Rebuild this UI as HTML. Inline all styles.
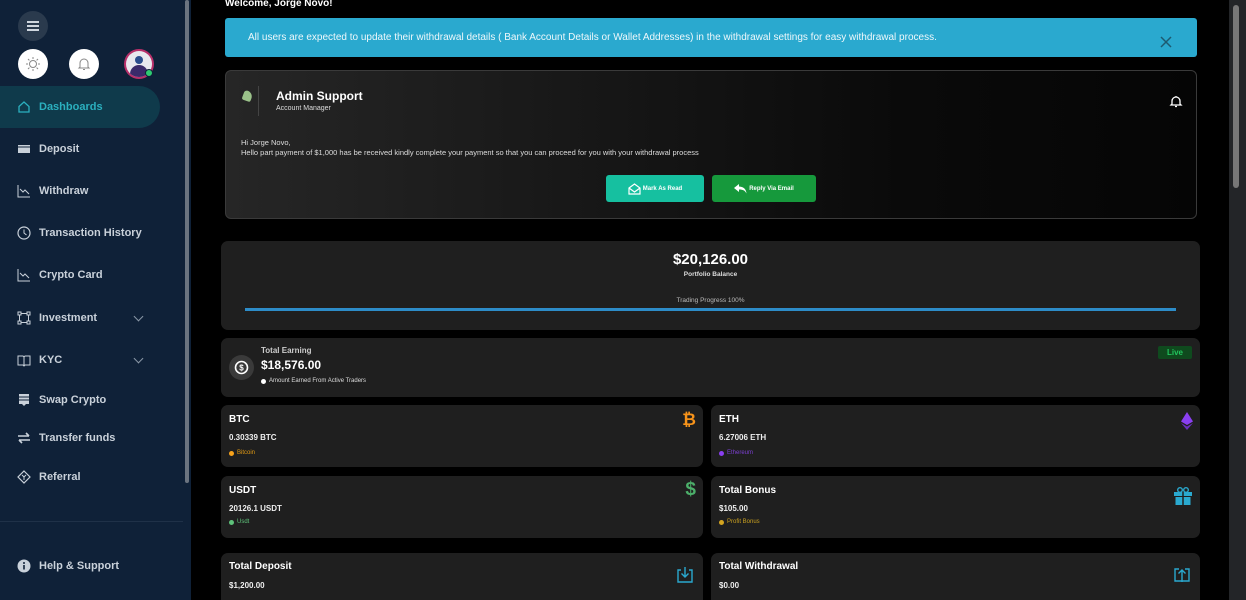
<!DOCTYPE html>
<html style="width:1246px;height:600px;overflow:hidden"><head><style>
*{box-sizing:border-box;margin:0;padding:0}
body{width:1246px;height:600px;overflow:hidden;background:#000;font-family:"Liberation Sans",sans-serif;color:#fff;position:relative}
.sb{position:absolute;left:0;top:0;width:183px;height:600px;background:#0f2138}
.sbs{position:absolute;left:183px;top:0;width:8px;height:600px;background:#0f2138}
.sbs i{position:absolute;left:2px;top:0;width:4px;height:483px;background:#6b7480;border-radius:2px}
.ham{position:absolute;left:18px;top:11px;width:30px;height:30px;border-radius:50%;background:#2a3a4d}
.ham b{position:absolute;left:9px;width:12px;height:2px;background:#cfd6de}
.circ{position:absolute;top:49px;width:30px;height:30px;border-radius:50%;background:#fff}
.nav{position:absolute;left:0;width:183px;height:42px;font-size:11px;font-weight:bold;color:#c9d1da;display:flex;align-items:center;padding-left:39px}
.nav svg{position:absolute;left:17px}
.act{background:#0f3a4b;color:#2bb0bf;width:160px;border-radius:0 21px 21px 0}
.chev{position:absolute;left:135px;top:16px;width:7px;height:7px;border-right:1.3px solid #8a97a6;border-bottom:1.3px solid #8a97a6;transform:rotate(45deg)}
.rsb{position:absolute;left:1229px;top:0;width:17px;height:600px;background:#232528}
.rsb i{position:absolute;left:4px;top:5px;width:6px;height:183px;background:#777;border-radius:3px}
.card{position:absolute;background:#1f1f1f;border-radius:7px}
.lbl{position:absolute;left:8px;font-size:10px;font-weight:bold}
.val{position:absolute;left:8px;font-size:8px;font-weight:bold;color:#eee}
.sub{position:absolute;left:8px;font-size:6px;display:flex;align-items:center}
.sub b{width:5px;height:5px;border-radius:50%;margin-right:3px;display:inline-block}
</style></head><body>
<div class="sb">
 <div class="ham"><b style="top:10px"></b><b style="top:14px"></b><b style="top:18px"></b></div>
 <div class="circ" style="left:18px"><svg width="30" height="30"><circle cx="15" cy="15" r="3.5" fill="none" stroke="#888" stroke-width="1"/><g stroke="#888" stroke-width="1"><path d="M15 8v2M15 20v2M8 15h2M20 15h2M10 10l1.4 1.4M18.6 18.6l1.4 1.4M10 20l1.4-1.4M18.6 11.4l1.4-1.4"/></g></svg></div>
 <div class="circ" style="left:69px"><svg width="30" height="30"><path d="M11 18v-4a4 4 0 0 1 8 0v4l1 1h-10zM14 20.5h2" fill="none" stroke="#888" stroke-width="1"/></svg></div>
 <div class="circ" style="left:124px;background:#b8306a"><div style="position:absolute;left:2px;top:2px;width:26px;height:26px;border-radius:50%;background:#e8e8ee;overflow:hidden"><div style="position:absolute;left:9px;top:5px;width:8px;height:8px;border-radius:50%;background:#2a4c8c"></div><div style="position:absolute;left:4px;top:14px;width:18px;height:14px;border-radius:9px 9px 0 0;background:#3a2a6a"></div></div><div style="position:absolute;left:21px;top:20px;width:8px;height:8px;border-radius:50%;background:#2ecc71;border:1px solid #0f2138"></div></div>
 <div class="nav act" style="top:86px"><svg width="14" height="14" viewBox="0 0 14 14"><path d="M2 6.5L7 2l5 4.5V12H2z" fill="none" stroke="#2bb0bf" stroke-width="1.3"/></svg>Dashboards</div>
 <div class="nav" style="top:128px"><svg width="14" height="14"><rect x="1" y="3" width="12" height="8" fill="#c9d1da"/><path d="M1 5h12" stroke="#0f2138"/></svg>Deposit</div>
 <div class="nav" style="top:170px"><svg width="14" height="14"><path d="M1 1v12h12M3 5l3 3 2-2 4 4" fill="none" stroke="#c9d1da"/></svg>Withdraw</div>
 <div class="nav" style="top:212px"><svg width="14" height="14"><circle cx="7" cy="7" r="6" fill="none" stroke="#c9d1da" stroke-width="1.2"/><path d="M7 3.5V7l2.5 2" fill="none" stroke="#c9d1da"/></svg>Transaction History</div>
 <div class="nav" style="top:254px"><svg width="14" height="14"><path d="M1 1v12h12M3 5l3 3 2-2 4 4" fill="none" stroke="#c9d1da"/></svg>Crypto Card</div>
 <div class="nav" style="top:297px"><svg width="14" height="14"><rect x="2.5" y="2.5" width="9" height="9" fill="none" stroke="#c9d1da"/><rect x="1" y="1" width="3" height="3" fill="#0f2138" stroke="#c9d1da"/><rect x="10" y="1" width="3" height="3" fill="#0f2138" stroke="#c9d1da"/><rect x="1" y="10" width="3" height="3" fill="#0f2138" stroke="#c9d1da"/><rect x="10" y="10" width="3" height="3" fill="#0f2138" stroke="#c9d1da"/></svg>Investment<span class="chev"></span></div>
 <div class="nav" style="top:339px"><svg width="14" height="14"><path d="M1 3h5l1 1 1-1h5v9H8l-1 1-1-1H1zM7 4v9" fill="none" stroke="#c9d1da"/></svg>KYC<span class="chev"></span></div>
 <div class="nav" style="top:379px"><svg width="14" height="14"><rect x="2" y="1" width="10" height="10" fill="#c9d1da"/><path d="M2 4h10M2 7h10" stroke="#0f2138"/><path d="M5 11l2 2 2-2" fill="#c9d1da"/></svg>Swap Crypto</div>
 <div class="nav" style="top:417px"><svg width="14" height="14"><path d="M1 5h11M9 2l3 3M13 9H2M5 12L2 9" fill="none" stroke="#c9d1da" stroke-width="1.6"/></svg>Transfer funds</div>
 <div class="nav" style="top:456px"><svg width="14" height="14"><path d="M7 1l6 6-6 6-6-6z" fill="none" stroke="#c9d1da" stroke-width="1.2"/><path d="M5 5l2 2 2-2M7 7v3" fill="none" stroke="#c9d1da"/></svg>Referral</div>
 <div style="position:absolute;left:0;top:521px;width:183px;height:1px;background:#1f3148"></div>
 <div class="nav" style="top:545px"><svg width="14" height="14"><circle cx="7" cy="7" r="6.5" fill="#c9d1da"/><path d="M7 6v4.5" stroke="#0f2138" stroke-width="1.6"/><circle cx="7" cy="4" r="1" fill="#0f2138"/></svg>Help &amp; Support</div>
</div>
<div class="sbs"><i></i></div>
<div class="rsb"><i></i></div>

<div style="position:absolute;left:225px;top:-2px;font-size:10px;font-weight:bold">Welcome, Jorge Novo!</div>
<div style="position:absolute;left:225px;top:18px;width:972px;height:39px;background:#2aa9cf;border-radius:3px;font-size:10px;color:#eef8fb;padding:14px 0 0 23px">All users are expected to update their withdrawal details ( Bank Account Details or Wallet Addresses) in the withdrawal settings for easy withdrawal process.
 <svg style="position:absolute;left:935px;top:18px" width="12" height="12"><path d="M1 1l10 10M11 1L1 11" stroke="#1d5a70" stroke-width="1.5"/></svg></div>

<div style="position:absolute;left:225px;top:70px;width:972px;height:149px;border:1px solid #3a3a3a;border-radius:6px;background:linear-gradient(90deg,#262626,#0a0a0a 70%,#050505)">
 <div style="position:absolute;left:15px;top:15px;width:18px;height:30px;border-right:1px solid #444"><div style="position:absolute;left:2px;top:5px;width:9px;height:10px;background:#9bc28a;border-radius:3px 6px 2px 2px;transform:rotate(20deg)"></div></div>
 <div style="position:absolute;left:50px;top:18px;font-size:12px;font-weight:bold">Admin Support</div>
 <div style="position:absolute;left:50px;top:34px;font-size:7px;color:#ddd">Account Manager</div>
 <svg style="position:absolute;left:943px;top:23px" width="14" height="14"><path d="M3 10V7a4 4 0 0 1 8 0v3l1 1H2zM6 12.5h2M7 2v1" fill="none" stroke="#fff" stroke-width="1.3"/></svg>
 <div style="position:absolute;left:15px;top:67px;font-size:7.5px;color:#ddd;line-height:10px">Hi Jorge Novo,<br>Hello part payment of $1,000 has be received kindly complete your payment so that you can proceed for you with your withdrawal process</div>
 <div style="position:absolute;left:380px;top:104px;width:98px;height:27px;background:#16c0a0;border-radius:3px;font-size:6px;font-weight:bold;display:flex;align-items:center;justify-content:center"><svg width="13" height="12" style="margin-right:2px"><path d="M1 5l5.5-4L12 5v6H1zM1 5l5.5 4L12 5" fill="none" stroke="#fff" stroke-width="1.2"/></svg>Mark As Read</div>
 <div style="position:absolute;left:486px;top:104px;width:104px;height:27px;background:#16993c;border-radius:3px;font-size:6px;font-weight:bold;display:flex;align-items:center;justify-content:center"><svg width="13" height="11" style="margin-right:2px"><path d="M5 1L0 5l5 4V6.5c4 0 6 1 7.5 4C12 6 10 4 5 3.5z" fill="#fff"/></svg>Reply Via Email</div>
</div>

<div class="card" style="left:221px;top:241px;width:979px;height:89px">
 <div style="position:absolute;width:100%;top:10px;text-align:center;font-size:15px;font-weight:bold">$20,126.00</div>
 <div style="position:absolute;width:100%;top:30px;text-align:center;font-size:6.5px;font-weight:bold;color:#ddd">Portfolio Balance</div>
 <div style="position:absolute;width:100%;top:56px;text-align:center;font-size:6.5px;color:#bbb">Trading Progress 100%</div>
 <div style="position:absolute;left:24px;top:67px;width:931px;height:3px;background:#2d8cc8"></div>
</div>

<div class="card" style="left:221px;top:338px;width:979px;height:59px">
 <div style="position:absolute;left:8px;top:17px;width:25px;height:25px;border-radius:50%;background:#3a3a3a"><svg width="25" height="25"><circle cx="12.5" cy="12.5" r="6" fill="none" stroke="#fff" stroke-width="1.6"/><text x="12.5" y="15.5" font-size="8" font-weight="bold" text-anchor="middle" fill="#fff" font-family="Liberation Sans">$</text></svg></div>
 <div style="position:absolute;left:40px;top:8px;font-size:8px;font-weight:bold;color:#ccc">Total Earning</div>
 <div style="position:absolute;left:40px;top:20px;font-size:12px;font-weight:bold">$18,576.00</div>
 <div class="sub" style="left:40px;top:40px;color:#ddd"><b style="background:#fff"></b>Amount Earned From Active Traders</div>
 <div style="position:absolute;left:937px;top:8px;width:34px;height:13px;background:#0f4a1e;border-radius:2px;color:#22c55e;font-size:8px;font-weight:bold;text-align:center;line-height:13px">Live</div>
</div>

<div class="card" style="left:221px;top:405px;width:482px;height:62px"><div class="lbl" style="top:9px">BTC</div><div class="val" style="top:28px">0.30339 BTC</div><div class="sub" style="top:45px;color:#e29a14"><b style="background:#f7a21b"></b>Bitcoin</div><div style="position:absolute;right:7px;top:5px;color:#f7931a;font-size:17px;font-weight:bold">₿</div></div>
<div class="card" style="left:711px;top:405px;width:489px;height:62px"><div class="lbl" style="top:9px">ETH</div><div class="val" style="top:28px">6.27006 ETH</div><div class="sub" style="top:45px;color:#7b3fd0"><b style="background:#8a3ff0"></b>Ethereum</div><svg style="position:absolute;right:7px;top:7px" width="12" height="18"><path d="M6 0L0 9.5 6 13l6-3.5z" fill="#8a3ff0"/><path d="M0 11l6 7 6-7-6 3.5z" fill="#6a2fc0"/></svg></div>
<div class="card" style="left:221px;top:476px;width:482px;height:62px"><div class="lbl" style="top:9px">USDT</div><div class="val" style="top:28px">20126.1 USDT</div><div class="sub" style="top:43px;color:#5ec27a"><b style="background:#5ec27a"></b>Usdt</div><div style="position:absolute;right:7px;top:3px;color:#4caf6a;font-size:19px;font-weight:bold">$</div></div>
<div class="card" style="left:711px;top:476px;width:489px;height:62px"><div class="lbl" style="top:9px">Total Bonus</div><div class="val" style="top:28px">$105.00</div><div class="sub" style="top:43px;color:#c9a020"><b style="background:#d4a520"></b>Profit Bonus</div><svg style="position:absolute;right:8px;top:11px" width="18" height="18"><rect x="0" y="5" width="18" height="4" fill="#2aa9cf"/><rect x="1.5" y="10" width="15" height="8" fill="#2aa9cf"/><path d="M9 5v13" stroke="#1f1f1f" stroke-width="1.5"/><circle cx="6" cy="3" r="2.3" fill="none" stroke="#2aa9cf" stroke-width="1.4"/><circle cx="12" cy="3" r="2.3" fill="none" stroke="#2aa9cf" stroke-width="1.4"/></svg></div>
<div class="card" style="left:221px;top:553px;width:482px;height:47px;border-radius:7px 7px 0 0"><div class="lbl" style="top:8px">Total Deposit</div><div class="val" style="top:28px">$1,200.00</div><svg style="position:absolute;right:10px;top:13px" width="16" height="18"><path d="M4 4H1v12h14V4h-3" fill="none" stroke="#2aa9cf" stroke-width="1.4"/><path d="M8 1v10M4.5 7.5L8 11l3.5-3.5" fill="none" stroke="#2aa9cf" stroke-width="1.4"/></svg></div>
<div class="card" style="left:711px;top:553px;width:489px;height:47px;border-radius:7px 7px 0 0"><div class="lbl" style="top:8px">Total Withdrawal</div><div class="val" style="top:28px">$0.00</div><svg style="position:absolute;right:10px;top:12px" width="16" height="18"><path d="M5 4H1v12h14V4h-4" fill="none" stroke="#2aa9cf" stroke-width="1.4"/><path d="M8 17V5M4.5 8.5L8 5l3.5 3.5" fill="none" stroke="#2aa9cf" stroke-width="1.4"/></svg></div>
</body></html>
